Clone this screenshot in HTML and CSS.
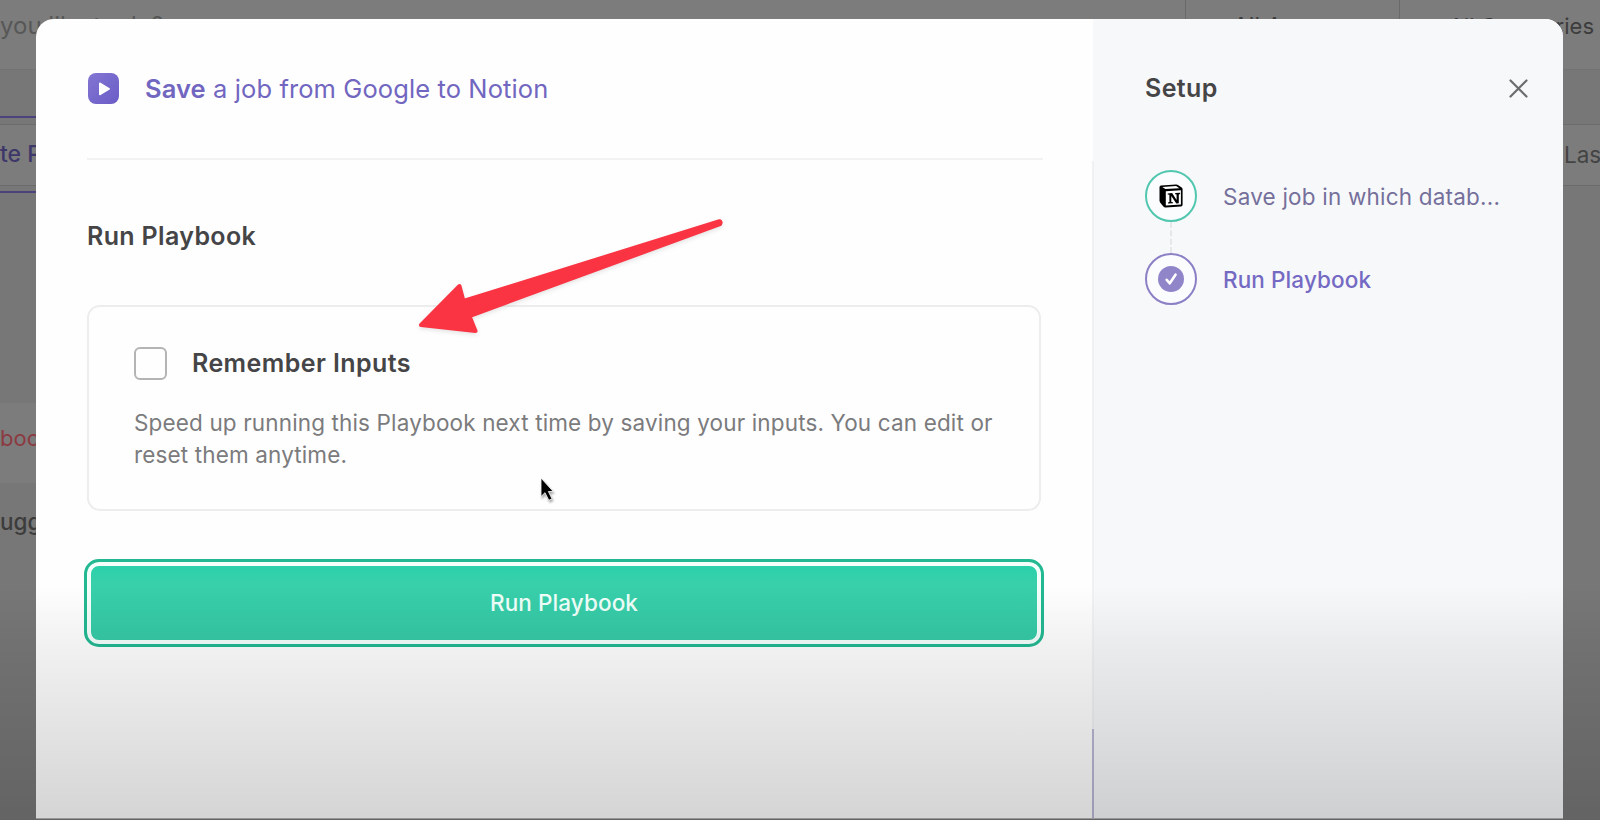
FILE: index.html
```html
<!DOCTYPE html>
<html lang="en">
<head>
<meta charset="utf-8">
<title>Run Playbook</title>
<link rel="stylesheet" href="styles.css">
</head>
<body>
<div class="page">
	<div class="filters">
		<div class="search">you like to do?</div>
		<div class="filter apps">All Apps</div>
		<div class="filter cats">All Categories</div>
	</div>
	<div class="band"></div>
	<div class="tabs">
		<span class="tab">te Playbook</span>
		<span class="last">Las</span>
	</div>
	<div class="bg_label red">boo</div>
	<div class="bg_label dark">ugg</div>
</div>

<div class="modal">
	<div class="main">
		<div class="title">
			<svg class="logo" width="31" height="31" viewBox="0 0 31 31">
				<defs><linearGradient id="lg" x1="0" y1="0" x2="1" y2="1"><stop offset="0" stop-color="#8276d3"/><stop offset="1" stop-color="#6a5cc6"/></linearGradient></defs>
				<rect width="31" height="31" rx="8" fill="url(#lg)"/>
				<path d="M11.8 10.3v11.2l9.4-5.6z" fill="#fff" stroke="#fff" stroke-width="1.6" stroke-linejoin="round"/>
			</svg>
			<div class="title_text"><b>Save</b> a job from Google to Notion</div>
		</div>
		<h2>Run Playbook</h2>
		<div class="card">
			<div class="remember"><span class="checkbox"></span><label>Remember Inputs</label></div>
			<p>Speed up running this Playbook next time by saving your inputs. You can edit or<br>reset them anytime.</p>
		</div>
		<button class="btn">Run Playbook</button>
	</div>
	<div class="side">
		<div class="side_head">
			<h3>Setup</h3>
			<svg width="19" height="19" viewBox="0 0 19 19"><path d="M1.5 1.5l16 16M17.5 1.5l-16 16" stroke="#6c6c6e" stroke-width="2.2" stroke-linecap="round"/></svg>
		</div>
		<div class="step">
			<div class="circle green">
				<svg width="24" height="24" viewBox="0 0 24 24">
					<path d="M.5 3.200Q.5 1.500 2 1.400L17 .4q1.200-.1 2 .5l3.700 2.700q.9.700.9 1.900v15.200q0 1.600-1.700 1.700L6.700 23.500q-1.400.1-2.300-1L1.500 19Q.5 17.900.5 16.500z"/>
					<path d="M3.300 2.900l13.800-1 3.300 2.300-14 .9z" fill="#fff"/>
					<path d="M6.800 7.200l15.100-.9v14.200l-15.100.9z" fill="#fff"/>
					<path d="M8.700 9.400l4.400-.3 4.500 6.800v-5.400l-1.400-.3v-1.100l4.900-.3v1.100l-1.300.5v8.900l-2.500.2-5-7.500v5.900l1.600.3v1l-4.900.3v-1l1.400-.5v-7.300l-1.700-.2z"/>
				</svg>
			</div>
			<span>Save job in which datab...</span>
		</div>
		<div class="dash"></div>
		<div class="step active">
			<div class="circle purple">
				<svg width="26" height="26" viewBox="0 0 26 26"><circle cx="13" cy="13" r="13" fill="#9085c9"/><path d="M8.700 13.800l3.100 3.500 5.700-8.600" fill="none" stroke="#fff" stroke-width="2.600" stroke-linecap="round" stroke-linejoin="round"/></svg>
			</div>
			<span>Run Playbook</span>
		</div>
	</div>
	<div class="line"></div>
</div>

<svg class="arrow" width="350" height="150" viewBox="0 0 350 150">
	<path d="M31 125L69.500 86 73.500 101 329.500 21.200Q331.500 22 330 24.200L79.500 116 85.500 131z" fill="#fa3442" stroke="#fa3442" stroke-width="4" stroke-linejoin="round"/>
</svg>
<svg class="cursor" width="22" height="30" viewBox="0 0 22 30">
	<path d="M3 2v18.500l4-3.800 3.800 7.600 3.200-1.500-3.600-7.300h4.800z" fill="#000" stroke="#fff" stroke-width=".8"/>
</svg>
<div class="shade"></div>
</body>
</html>
```

FILE: styles.css
```css
*{box-sizing: border-box;}
body{margin: 0;height: 820px;overflow: hidden;font-family: Inter, "Liberation Sans", sans-serif;background: #777;}
h2,h3,p{margin: 0;}
.page {height: 820px;overflow: hidden;font-size: 23px;color: #3c3c3c;}
.filters {display: flex;height: 70px;line-height: 52px;background: #7c7c7c;border-bottom: 1px solid #737373;}
.search {width: 1185px;color: #575757;font-size: 24px;}
.filter {border-left: 1px solid #696969;white-space: nowrap;}
.filter.apps {width: 214px;padding-left: 47px;}
.filter.cats {flex: 1;padding: 0 6px 0 0;text-align: right;font-size: 22px;}
.band {height: 55px;background: #777;border-bottom: 1px solid #6c6c6c;}
.tabs {display: flex;justify-content: space-between;height: 61px;line-height: 59px;background: #7c7c7c;border-bottom: 1px solid #6b6b6b;}
.tab {width: 200px;height: 77px;line-height: 73px;margin-top: -9px;border-top: 2px solid #4b447c;border-bottom: 2px solid #4b447c;color: #3e3769;font-weight: 500;white-space: nowrap;}
.last {width: 36px;color: #444;font-size: 22.500px;}
.bg_label {width: 36px;line-height: 30px;height: 80px;padding-top: 20px;}
.bg_label.red {margin-top: 217px;color: #8c3a41;background: #7c7c7c;font-size: 22px;}
.bg_label.dark {margin-top: -1px;padding-top: 25px;font-size: 22.500px;font-weight: 500;}

.modal {position: absolute;left: 36px;top: 19px;width: 1527px;height: 800px;display: flex;background: #fefefe;border-radius: 18px 18px 0 0;border-bottom: 1px solid #b5b5b5;overflow: hidden;}
.main {width: 1057px;padding: 0 49px 0 51px;}
.title {display: flex;align-items: center;height: 141px;border-bottom: 2px solid #f2f2f3;margin-right: 1px;}
.logo {margin: 0 26px 0 1px;}
.title_text {font-size: 25.500px;color: #7166c0;white-space: nowrap;letter-spacing: .1px;}
.title_text b {font-weight: 600;}
.main h2 {font-size: 25px;font-weight: 600;line-height: 30px;color: #454547;margin: 61px 0 54px;letter-spacing: .35px;}
.card {height: 206px;width: 954px;border: 2px solid #ededee;border-radius: 13px;padding: 39px 45px 0;}
.remember {display: flex;align-items: center;height: 34px;}
.checkbox {width: 33px;height: 33px;border: 2px solid #b4b4b5;border-radius: 6px;margin-right: 25px;}
.remember label {font-size: 25px;font-weight: 600;color: #454547;letter-spacing: .42px;}
.card p {font-size: 22.500px;line-height: 32px;color: #7b7b7d;margin-top: 27px;letter-spacing: .14px;white-space: nowrap;}
.btn {display: block;width: 960px;height: 88px;margin: 48px 0 0 -3px;padding: 0 0 2px;border: 3px solid #22b892;border-radius: 15px;background: linear-gradient(#26d1aa, #38d0ab 25%, #35c9a6) padding-box;box-shadow: inset 0 0 0 4px #f4fffc;font: 500 22.500px Inter, sans-serif;letter-spacing: .1px;color: #effff9;}
.side {flex: 1;background: #f7f8fa;padding: 49px 35px 0 52px;}
.side_head {display: flex;justify-content: space-between;align-items: center;height: 40px;}
.side h3 {font-size: 25px;font-weight: 600;color: #454547;letter-spacing: .4px;}
.step {display: flex;align-items: center;height: 52px;font-size: 22.500px;color: #75709b;letter-spacing: .2px;white-space: nowrap;}
.side_head + .step {margin-top: 62px;}
.circle {width: 52px;height: 52px;border-radius: 50%;display: flex;align-items: center;justify-content: center;margin-right: 26px;background: #fbfcfd;}
.circle.green {border: 2px solid #52c7af;}
.circle.purple {border: 2px solid #8b80c6;}
.step.active {color: #756ac3;font-weight: 500;letter-spacing: .1px;}
.dash {height: 31px;width: 27px;border-right: 2px dashed #e6e7ea;}
.line {position: absolute;left: 1056px;top: 142px;width: 2px;height: 657px;background: linear-gradient(#efeff2 568px, #aaa6cd 568px);opacity: .8;}

.arrow {position: absolute;left: 390px;top: 200px;filter: drop-shadow(0 2px 2px rgba(0,0,0,.1));}
.cursor {position: absolute;left: 538px;top: 476px;filter: drop-shadow(1px 2px 1px rgba(0,0,0,.35));}
.shade {position: absolute;left: 0;right: 0;top: 585px;bottom: 0;background: linear-gradient(rgba(0,0,0,0), rgba(0,0,0,.05) 25%, rgba(0,0,0,.165));}
```
